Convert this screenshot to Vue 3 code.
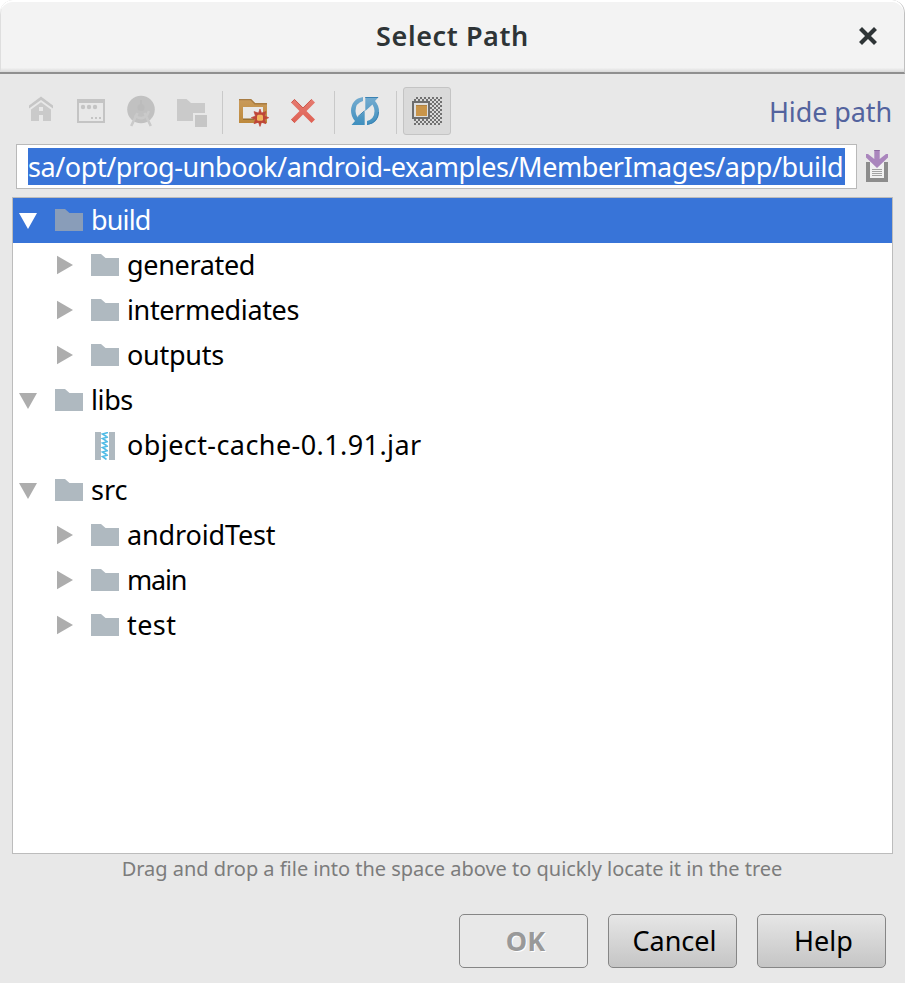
<script setup>
import { ref } from 'vue'

const path = ref('sa/opt/prog-unbook/android-examples/MemberImages/app/build')

const rows = [
  { name: 'build', depth: 0, state: 'open', icon: 'folder', tracking: -0.85, selected: true },
  { name: 'generated', depth: 1, state: 'closed', icon: 'folder', tracking: -0.33 },
  { name: 'intermediates', depth: 1, state: 'closed', icon: 'folder', tracking: -0.38 },
  { name: 'outputs', depth: 1, state: 'closed', icon: 'folder', tracking: -0.25 },
  { name: 'libs', depth: 0, state: 'open', icon: 'folder', tracking: -0.4 },
  { name: 'object-cache-0.1.91.jar', depth: 1, state: 'leaf', icon: 'jar', tracking: 0.42 },
  { name: 'src', depth: 0, state: 'open', icon: 'folder', tracking: 0 },
  { name: 'androidTest', depth: 1, state: 'closed', icon: 'folder', tracking: -0.15 },
  { name: 'main', depth: 1, state: 'closed', icon: 'folder', tracking: -1.2 },
  { name: 'test', depth: 1, state: 'closed', icon: 'folder', tracking: 0.45 }
]
</script>

<template>
  <div class="dialog">
    <header class="titlebar">
      <h1 class="title">Select Path</h1>
      <svg class="close" width="18" height="18" viewBox="0 0 18 18">
        <path d="M3 3L15 15M15 3L3 15" fill="none" stroke="#2e3436" stroke-width="4.2" stroke-linecap="square" />
      </svg>
    </header>

    <div class="toolbar">
      <div class="group">
        <svg class="icon" viewBox="0 0 32 32">
          <path d="M4 10.5L16 1.5L28 10.5V13.5L16 5L4 13.5Z" fill="#c6c6c6" />
          <path fill-rule="evenodd" d="M6 14.5L16 7.3L26 14.5V26H18V20H14V26H6ZM14 12V16H18V12Z" fill="#cacaca" />
        </svg>
        <svg class="icon" viewBox="0 0 32 32">
          <path fill-rule="evenodd" d="M2 4H30V28H2ZM4 8V26H28V8Z" fill="#c4c4c4" />
          <g fill="#c4c4c4">
            <circle cx="8" cy="12" r="2.2" /><circle cx="14" cy="12" r="2.2" /><circle cx="20" cy="12" r="2.2" />
            <path d="M16 22h2v2h-2zM20 22h2v2h-2zM24 22h2v2h-2z" />
          </g>
        </svg>
        <svg class="icon" viewBox="0 0 32 32">
          <circle cx="16" cy="14.5" r="13.8" fill="#c1c1c1" />
          <g fill="none" stroke="#cacaca" stroke-width="2.600">
            <path d="M12.500 18L6.200 31M19.500 18L25.800 31" />
            <path d="M9.500 20.500Q17 26 22 20L24 16" />
          </g>
          <circle cx="16" cy="12.500" r="3.500" fill="#bcbcbc" />
          <path d="M15 5h2v5h-2z" fill="#bcbcbc" />
        </svg>
        <svg class="icon" viewBox="0 0 32 32">
          <path d="M2 4H11.5L16 8H30V18H18V26H2Z" fill="#cacaca" />
          <path d="M20 20H32V32H20Z" fill="#c6c6c6" />
        </svg>
      </div>
      <i class="divider"></i>
      <div class="group">
        <svg class="icon" viewBox="0 0 32 32">
          <defs>
            <linearGradient id="gold" x1="0" y1="0" x2="0" y2="1">
              <stop offset="0" stop-color="#c99b5c" /><stop offset="1" stop-color="#bd893c" />
            </linearGradient>
          </defs>
          <path fill-rule="evenodd" d="M2 4H14L18 8H30V28H2ZM6 12V24H26V12Z" fill="url(#gold)" />
          <path d="M2 4H14L18 8H30V9.500H17.500L13.500 5.300H2Z" fill="#a87c43" />
          <path d="M6 23.500H17V24.700H6Z" fill="#8f682c" />
          <path d="M23 14L24.500 18.100L29 16.600L27.500 21L31.700 22.700L27.500 24.400L29 28.700L24.500 27.200L23 31.400L21.500 27.200L17 28.700L18.500 24.400L14.300 22.700L18.500 21L17 16.600L21.500 18.100Z" fill="#be4638" stroke="#be4638" stroke-width=".7" />
          <rect x="20" y="19.700" width="6" height="6" rx="1.500" fill="#f1b45d" />
        </svg>
        <svg class="icon" viewBox="0 0 32 32">
          <defs>
            <linearGradient id="red" x1="0" y1="0" x2="0" y2="1">
              <stop offset="0" stop-color="#e57b70" /><stop offset="1" stop-color="#df6154" />
            </linearGradient>
          </defs>
          <path d="M7.500 4L16 12.500L24.500 4L28 7.500L19.500 16L28 24.500L24.500 28L16 19.500L7.500 28L4 24.500L12.500 16L4 7.500Z" fill="url(#red)" />
          <path d="M4.500 7.500L7.500 4.500L16 13L24.500 4.500M4.500 24.500L7.500 27.500" fill="none" stroke="#cc594e" stroke-width="1" />
        </svg>
      </div>
      <i class="divider"></i>
      <svg class="icon" viewBox="0 0 32 32">
        <defs>
          <linearGradient id="blue" x1="0" y1="0" x2="0" y2="1">
            <stop offset="0" stop-color="#75acd0" /><stop offset="1" stop-color="#3f8fbe" />
          </linearGradient>
        </defs>
        <path d="M14 2V6Q6.500 8 6.500 16Q6.500 19 8.500 22.500L15.700 16V30H2.500L6 26Q2 21.500 2 15.500Q2.500 4 14 2Z" fill="url(#blue)" />
        <path d="M18 30V26Q25.500 24 25.500 16Q25.500 13 23.500 9.500L16.300 16V2H29.700L26 6Q30 10.500 30 16.500Q29.500 28 18 30Z" fill="url(#blue)" />
        <path d="M16.300 2.500H29M8.500 22L15.500 15.800M18 29.500Q29 28 29.500 17" fill="none" stroke="#3a82b3" stroke-width="1" />
      </svg>
      <i class="divider last"></i>
      <button class="toggle">
        <svg class="icon" viewBox="0 0 32 32" shape-rendering="crispEdges">
          <defs>
            <pattern id="checks" width="4" height="4" x="3" y="2" patternUnits="userSpaceOnUse">
              <path d="M2 0h2v2h-2zM0 2h2v2h-2z" fill="#717171" />
            </pattern>
          </defs>
          <path d="M3 2H31V30H3Z" fill="url(#checks)" />
          <path d="M1 6H19V24H1Z" fill="#6d6d6d" />
          <path d="M3 8H17V22H3Z" fill="#dedede" />
          <path d="M5 10H16V21H5Z" fill="#c9954a" />
          <path d="M5 10H16V11H5Z" fill="#b08243" />
        </svg>
      </button>
      <a class="hide">Hide path</a>
    </div>

    <div class="pathrow">
      <div class="field"><span class="selection"><span class="pathtext">{{ path }}</span></span></div>
      <svg class="history" width="22" height="32" viewBox="0 0 22 32">
        <path d="M0 12H22V32H0Z" fill="#8c8c8c" />
        <path d="M4 12H18V28H4Z" fill="#f1f1f1" />
        <path d="M6 19.500h10M6 21.500h10M6 23.500h10M6 25.500h10" stroke="#a2a2a2" stroke-width="1" />
        <path d="M8.300 0H13.700V9L20 4H22V7.500L11 18L0 7.500V4H2L8.300 9Z" fill="#aa86bd" />
        <path d="M8.300 .5H13.700" stroke="#8c6a9f" />
      </svg>
    </div>

    <main class="tree">
      <div
        v-for="row in rows"
        :key="row.name"
        class="row"
        :class="[{ selected: row.selected, nested: row.depth === 1 }]"
      >
        <svg class="arrow" width="18" height="20" viewBox="0 0 18 20">
          <path v-if="row.state === 'open'" d="M0 3H18L9 19Z" fill="currentColor" />
          <path v-else-if="row.state === 'closed'" d="M2 .7V19.300L18 10Z" fill="currentColor" />
        </svg>
        <svg v-if="row.icon === 'folder'" class="node" width="28" height="28" viewBox="0 0 28 28">
          <path d="M0 2H10L14.500 6H28V24H0Z" fill="currentColor" />
        </svg>
        <svg v-else class="node" width="28" height="28" viewBox="0 0 28 28">
          <path d="M4 0h6v28H4zM18 0h6v28h-6z" fill="currentColor" />
          <path
            d="M17 .5L11.500 2L15.500 4.500M17 5L11.500 6.500L15.500 9M17 9.500L11.500 11L15.500 13.500M17 14L11.500 15.500L15.500 18M17 18.500L11.500 20L15.500 22.500M17 23L11.500 24.500L15.500 27.500"
            fill="none" stroke="#4fbbe6" stroke-width="1.600"
          />
        </svg>
        <span class="name" :style="{ letterSpacing: row.tracking + 'px' }">{{ row.name }}</span>
      </div>
    </main>

    <p class="hint">Drag and drop a file into the space above to quickly locate it in the tree</p>

    <footer class="actions">
      <button class="btn ok" disabled>OK</button>
      <button class="btn cancel">Cancel</button>
      <button class="btn help">Help</button>
    </footer>
  </div>
</template>

<style>
body { margin: 0; background: #fff; }
</style>

<style scoped>
.dialog {
  box-sizing: border-box;
  width: 905px;
  height: 983px;
  display: flex;
  flex-direction: column;
  overflow: hidden;
  background: #e8e8e8;
  border-radius: 13px 13px 0 0;
  font-family: "Noto Sans", "Open Sans", sans-serif;
  font-size: 27px;
  color: #000;
}
.titlebar {
  box-sizing: border-box;
  flex: none;
  height: 74px;
  display: flex;
  align-items: center;
  justify-content: flex-end;
  padding-right: 27px;
  border-right: 1px solid #c0c0c0;
  border-bottom: 2px solid #8f8f8f;
  border-radius: 13px 13px 0 0;
  background: linear-gradient(#f3f3f3 94%, #d9d9d9);
  box-shadow: inset 0 2px #fff, inset 1px 0 #dedede;
}
.title {
  flex: 1;
  margin: 0;
  padding: 0 0 2px 46px;
  text-align: center;
  font-size: 27px;
  font-weight: 600;
  letter-spacing: 0.6px;
  color: #2e3436;
}
.toolbar {
  flex: none;
  height: 70px;
  box-sizing: border-box;
  display: flex;
  align-items: flex-start;
  padding: 21px 13px 0 25px;
}
.group { display: flex; gap: 18px; }
.icon { display: block; width: 32px; height: 32px; flex: none; }
.divider { width: 1px; height: 43px; margin: -4px 14px 0 15px; background: #c9c9c9; flex: none; }
.divider.last { margin-right: 6px; }
.toggle {
  box-sizing: border-box;
  width: 48px;
  height: 48px;
  margin: -8px 0 0;
  padding: 7px;
  border: 1px solid #c4c4c4;
  border-radius: 3px;
  background: #dadada;
}
.hide { margin: -1px 0 0 auto; line-height: 36px; letter-spacing: -0.1px; color: #53639e; white-space: nowrap; }
.pathrow { flex: none; display: flex; height: 53px; padding-left: 16px; box-sizing: border-box; }
.field {
  box-sizing: border-box;
  width: 841px;
  height: 45px;
  padding: 3px 10px 3px 11px;
  border: 1px solid #b9b9b9;
  background: #fff;
}
.selection { display: block; width: 817px; height: 37px; background: #3874d8; color: #fff; }
.pathtext { display: block; line-height: 37px; letter-spacing: -0.43px; white-space: nowrap; }
.history { margin: 6px 0 0 9px; flex: none; }
.tree {
  box-sizing: border-box;
  flex: none;
  width: 881px;
  height: 657px;
  margin-left: 12px;
  border: 1px solid #bcbcbc;
  background: #fff;
}
.row { display: flex; align-items: flex-start; height: 45px; padding-left: 6px; white-space: nowrap; }
.row.nested { padding-left: 42px; }
.arrow { color: #adadad; margin: 12px 18px 0 0; }
.node { color: #afb9c0; margin: 9px 8px 0 0; }
.name { line-height: 43px; }
.selected { background: #3874d8; color: #fff; }
.selected .arrow { color: #fff; }
.selected .node { color: #899db9; }
.hint { flex: none; margin: 0 0 0 -1px; height: 60px; line-height: 29px; font-size: 20px; letter-spacing: -0.02px; text-align: center; color: #7c7c7c; }
.actions { display: flex; justify-content: flex-end; gap: 20px; padding-right: 19px; }
.btn {
  box-sizing: border-box;
  width: 129px;
  height: 54px;
  padding: 0 0 2px 4px;
  border: 1px solid #868686;
  border-radius: 5px;
  background: linear-gradient(#e6e6e6, #c5c5c5);
  font: inherit;
  color: #000;
}
.btn.ok { background: #e8e8e8; color: #999; font-weight: 700; text-shadow: 1px 1px #fff; }
</style>
